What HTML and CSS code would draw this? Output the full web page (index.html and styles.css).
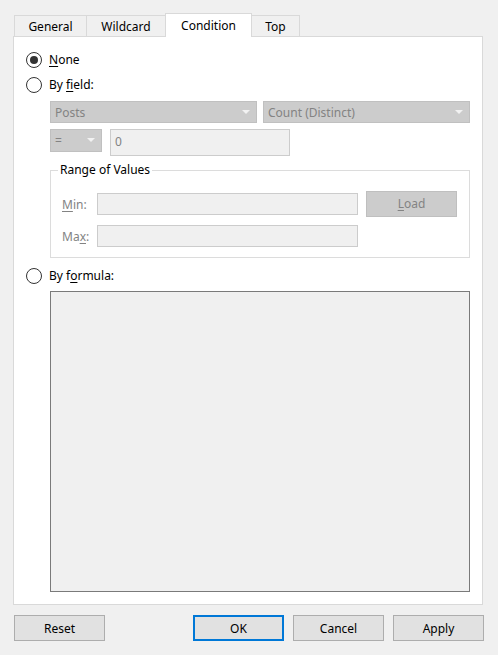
FILE: index.html
```html
<!DOCTYPE html>
<html lang="en">
  <head>
    <meta charset="UTF-8" />
    <meta name="viewport" content="width=device-width, initial-scale=1.0" />
    <title>Filter - Condition</title>
    <link rel="stylesheet" href="styles.css">
  </head>
  <body>
    <div class="dialog">
      <div class="tabs">
        <div class="tab tab-general">General</div>
        <div class="tab tab-wildcard">Wildcard</div>
        <div class="tab tab-condition active">Condition</div>
        <div class="tab tab-top">Top</div>
      </div>

      <div class="panel">
        <div class="option opt-none">
          <span class="radio checked"></span>
          <span class="label"><u>N</u>one</span>
        </div>

        <div class="option opt-field">
          <span class="radio"></span>
          <span class="label">By <u>f</u>ield:</span>
        </div>

        <div class="indent">
          <div class="combo-row">
            <div class="combo wide">
              <span>Posts</span>
              <svg class="arrow" width="8" height="5" viewBox="0 0 8 5"><polygon points="0,0 8,0 4,4" /></svg>
            </div>
            <div class="combo wide">
              <span>Count (Distinct)</span>
              <svg class="arrow" width="8" height="5" viewBox="0 0 8 5"><polygon points="0,0 8,0 4,4" /></svg>
            </div>
          </div>

          <div class="value-row">
            <div class="combo small">
              <span>=</span>
              <svg class="arrow" width="8" height="5" viewBox="0 0 8 5"><polygon points="0,0 8,0 4,4" /></svg>
            </div>
            <div class="input value">0</div>
          </div>

          <fieldset class="range">
            <legend>Range of Values</legend>
            <div class="range-row row-min">
              <span class="range-label"><u>M</u>in:</span>
              <div class="input range-input"></div>
              <div class="btn-load"><u>L</u>oad</div>
            </div>
            <div class="range-row row-max">
              <span class="range-label">Ma<u>x</u>:</span>
              <div class="input range-input"></div>
            </div>
          </fieldset>
        </div>

        <div class="option opt-formula">
          <span class="radio"></span>
          <span class="label">By f<u>o</u>rmula:</span>
        </div>

        <div class="indent">
          <div class="formula"></div>
        </div>
      </div>

      <div class="footer">
        <button class="btn">Reset</button>
        <div class="spacer"></div>
        <button class="btn default">OK</button>
        <button class="btn">Cancel</button>
        <button class="btn">Apply</button>
      </div>
    </div>
  </body>
</html>
```

FILE: styles.css
```css
body {
  margin: 0;
  background: #f0f0f0;
  font-family: "Noto Sans", "Segoe UI", sans-serif;
  font-size: 12px;
  color: #000;
}
u {
  text-decoration-thickness: 1px;
  text-underline-offset: 2px;
}
.dialog {
  width: 498px;
  height: 655px;
  padding: 0 15px 0 13px;
  box-sizing: border-box;
}

/* tabs */
.tabs {
  display: flex;
  align-items: flex-end;
  height: 23px;
  padding-top: 13px;
  padding-left: 1px;
}
.tab {
  height: 21px;
  line-height: 21px;
  box-sizing: border-box;
  border: 1px solid #d9d9d9;
  border-bottom: none;
  background: #f0f0f0;
  text-align: center;
  margin-left: -1px;
}
.tab:first-child {
  margin-left: 0;
}
.tab-general { width: 73px; }
.tab-wildcard { width: 80px; }
.tab-condition { width: 87px; }
.tab-top { width: 49px; }
.tab.active {
  height: 24px;
  line-height: 23px;
  background: #fff;
  margin-bottom: -1px;
  position: relative;
  z-index: 1;
}

/* panel */
.panel {
  height: 569px;
  box-sizing: border-box;
  border: 1px solid #d9d9d9;
  background: #fff;
  padding: 15px 12px 0 12px;
}
.option {
  display: flex;
  align-items: center;
  height: 16px;
}
.opt-field { margin-top: 9px; }
.opt-formula { margin-top: 10px; }
.radio {
  width: 16px;
  height: 16px;
  box-sizing: border-box;
  border: 1px solid #333;
  border-radius: 50%;
  display: flex;
  align-items: center;
  justify-content: center;
}
.radio.checked::after {
  content: "";
  width: 8px;
  height: 8px;
  border-radius: 50%;
  background: #333;
}
.label {
  margin-left: 7px;
  line-height: 16px;
}
.indent {
  padding-left: 24px;
}

/* combos and inputs */
.combo-row {
  display: flex;
  gap: 6px;
  margin-top: 8px;
}
.combo {
  height: 22px;
  box-sizing: border-box;
  background: #cccccc;
  border: 1px solid #c0c0c0;
  color: #838383;
  display: flex;
  align-items: center;
  justify-content: space-between;
  padding: 0 6px 0 4px;
}
.combo.wide { width: 207px; }
.combo.small {
  width: 52px;
  height: 23px;
}
.arrow {
  fill: #f2f2f2;
}
.value-row {
  display: flex;
  gap: 8px;
  margin-top: 6px;
}
.input {
  box-sizing: border-box;
  background: #f0f0f0;
  border: 1px solid #cccccc;
  color: #838383;
}
.input.value {
  width: 180px;
  height: 27px;
  line-height: 24px;
  padding-left: 4px;
}

/* range group */
.range {
  margin: 6px 0 0 0;
  width: 420px;
  box-sizing: border-box;
  border: 1px solid #dcdcdc;
  padding: 0 12px 10px 11px;
}
.range legend {
  padding: 0 2px;
  margin-left: -4px;
  line-height: 16px;
}
.range-row {
  display: flex;
  align-items: center;
}
.row-min {
  height: 26px;
  margin-top: 13px;
}
.row-max {
  height: 22px;
  margin-top: 8px;
}
.range-label {
  width: 35px;
  color: #838383;
}
.range-input {
  width: 261px;
  height: 22px;
}
.btn-load {
  width: 91px;
  height: 26px;
  box-sizing: border-box;
  margin-left: 8px;
  background: #cccccc;
  border: 1px solid #bfbfbf;
  color: #838383;
  text-align: center;
  line-height: 24px;
}

/* formula */
.formula {
  margin-top: 7px;
  width: 420px;
  height: 301px;
  box-sizing: border-box;
  background: #f0f0f0;
  border: 1px solid #7a7a7a;
}

/* buttons */
.footer {
  display: flex;
  gap: 9px;
  margin-top: 10px;
  padding-left: 1px;
  margin-right: -1px;
}
.spacer {
  flex: 1;
}
.btn {
  width: 91px;
  height: 26px;
  box-sizing: border-box;
  background: #e1e1e1;
  border: 1px solid #adadad;
  font-family: inherit;
  font-size: 12px;
  color: #000;
  padding: 0;
}
.btn.default {
  border: 2px solid #0078d7;
}
```
